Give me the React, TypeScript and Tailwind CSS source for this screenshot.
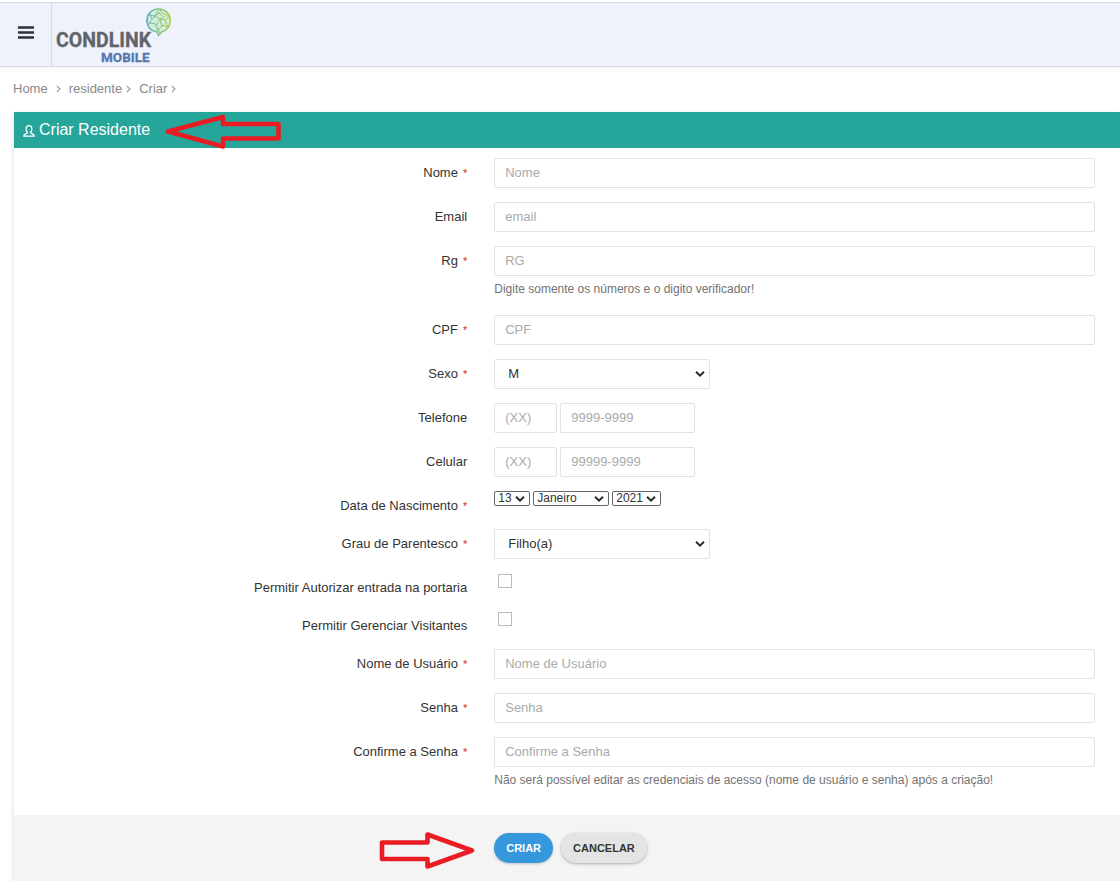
import React from "react";

const inputBase =
  "h-[30px] rounded-xs border border-[#e2e2e2] bg-white px-[10px] pb-[2px] text-[13px] text-[#333] placeholder:text-[#aaa] outline-none focus:border-[#93a1bb]";

function Field({
  id,
  label,
  required,
  help,
  compact,
  children,
}: {
  id: string;
  label: string;
  required?: boolean;
  help?: string;
  compact?: boolean;
  children: React.ReactNode;
}) {
  return (
    <div className="grid grid-cols-[43fr_57fr] gap-[27px]">
      <label htmlFor={id} className="pt-[6px] text-right leading-[18px]">
        {label}
        {required && <span className="ml-[5px] text-[11px] leading-none text-[#e02222]">*</span>}
      </label>
      <div className={compact ? "h-6" : ""}>
        {children}
        {help && <p className="h-[25px] pt-1 text-xs leading-[18px] text-[#737373]">{help}</p>}
      </div>
    </div>
  );
}

function TextField({ id, label, placeholder, required, help, type = "text" }: {
  id: string;
  label: string;
  placeholder: string;
  required?: boolean;
  help?: string;
  type?: string;
}) {
  return (
    <Field id={id} label={label} required={required} help={help}>
      <input id={id} type={type} placeholder={placeholder} className={`${inputBase} block w-full`} />
    </Field>
  );
}

function Chevron() {
  return (
    <svg viewBox="0 0 10 7" className="pointer-events-none absolute top-1/2 right-[5px] h-[7px] w-[10px] -translate-y-1/2" aria-hidden="true">
      <path d="M1 1.2 5 5.2 9 1.2" fill="none" stroke="#2b2b2b" strokeWidth="2" />
    </svg>
  );
}

function LargeSelect({ id, options }: { id: string; options: string[] }) {
  return (
    <div className="relative w-[216px]">
      <select
        id={id}
        className="block h-[30px] w-full appearance-none rounded-xs border border-[#e2e2e2] bg-white px-[13px] text-[13px] text-[#333] outline-none focus:border-[#93a1bb]"
      >
        {options.map((o) => <option key={o}>{o}</option>)}
      </select>
      <Chevron />
    </div>
  );
}

function SmallSelect({ id, label, options, width }: { id: string; label: string; options: string[]; width: string }) {
  return (
    <div className={`relative ${width}`}>
      <select id={id} aria-label={label} className="block h-[15px] w-full appearance-none rounded-xs border border-[#666] bg-white pl-[3px] text-xs leading-[13px] text-[#333]">
        {options.map((o) => <option key={o}>{o}</option>)}
      </select>
      <Chevron />
    </div>
  );
}

function PhoneField({ id, label, placeholder }: { id: string; label: string; placeholder: string }) {
  return (
    <Field id={id} label={label}>
      <div className="flex gap-[3px]">
        <input id={id} type="tel" placeholder="(XX)" className={`${inputBase} w-[63px]`} />
        <input type="tel" aria-label={`${label} número`} placeholder={placeholder} className={`${inputBase} w-[135px]`} />
      </div>
    </Field>
  );
}

function CheckField({ id, label }: { id: string; label: string }) {
  return (
    <Field id={id} label={label} compact>
      <input id={id} type="checkbox" className="mt-px ml-1 block size-[14px] appearance-none border border-[#bbb] bg-white checked:bg-[#3598dc]" />
    </Field>
  );
}

function Logo() {
  return (
    <svg viewBox="0 0 120 62" className="h-[62px] w-[120px]" role="img" aria-label="Condlink Mobile">
      <defs>
        <linearGradient id="globe" x1="0" x2="1">
          <stop offset="0" stopColor="#58b5c4" />
          <stop offset="1" stopColor="#a9cf4a" />
        </linearGradient>
      </defs>
      <circle cx="106.500" cy="17.500" r="11.500" fill="#d3ebd8" />
      <g fill="none" stroke="url(#globe)" strokeLinejoin="round">
        <path strokeWidth="1.600" d="M106.500 6c7 0 11.700 5 11.700 11.500 0 6-4 10-8.700 11.500l-3 3.500-1.500-3.500c-6-1-10-5-10-11.500C95 11 99.500 6 106.500 6Z" />
        <path strokeWidth="1" d="m97 12 6 1 4-7 5 5 5 2-4 5 3 6-6-2-4 6-2-7-7-1 6-7 5 3 5-3m-5 3-4 7m6 1-2-8 5 1m-6-8 3 4m-16 4 3 6m3-7-2-5m7 15 3 4m0-20-4 2" />
      </g>
      <text x="4" y="44" fontFamily="Roboto, sans-serif" fontSize="19.500" fontWeight="700" fill="#626469" stroke="#626469" strokeWidth=".3">CONDLINK</text>
      <text x="49" y="59" fontFamily="Roboto, sans-serif" fontSize="13.500" fontWeight="700" fill="#5279ae" stroke="#5279ae" strokeWidth=".3">MOBILE</text>
    </svg>
  );
}

function Crumb({ children, gap }: { children: string; gap: string }) {
  return (
    <li className={`flex items-center ${gap}`}>
      <a href="#">{children}</a>
      <svg viewBox="0 0 5 8" className="h-2 w-[5px]" aria-hidden="true">
        <path d="m.8.8 3.200 3.200-3.200 3.200" fill="none" stroke="#999" strokeWidth="1.1" />
      </svg>
    </li>
  );
}

const months = ["Janeiro", "Fevereiro", "Março", "Abril", "Maio", "Junho", "Julho", "Agosto", "Setembro", "Outubro", "Novembro", "Dezembro"];

export default function App() {
  return (
    <div className="min-h-screen overflow-x-hidden bg-white font-['Liberation_Sans',Arial,sans-serif] text-[13px] text-[#333]">
      <header className="mt-[2px] flex h-[65px] border-y border-[#d8dae6] bg-[#eff2fb] shadow-xs">
        <button type="button" aria-label="Menu" className="flex w-[52px] items-center justify-center border-r border-[#d8dae6] pb-[5px]">
          <svg viewBox="0 0 16 13" className="h-[13px] w-4" aria-hidden="true">
            <path d="M0 1.500h16M0 6.500h16M0 11.500h16" stroke="#2f3038" strokeWidth="2.600" />
          </svg>
        </button>
        <a href="#"><Logo /></a>
      </header>

      <nav aria-label="Trilha" className="pt-[13px] pl-[13px]">
        <ol className="flex h-[18px] items-center gap-2 text-[#888]">
          <Crumb gap="gap-2">Home</Crumb>
          <Crumb gap="gap-1">residente</Crumb>
          <Crumb gap="gap-1">Criar</Crumb>
        </ol>
      </nav>

      <main className="mt-[14px] ml-[14px] shadow-[0_2px_5px_rgba(0,0,0,0.15)]">
        <div className="relative flex h-9 items-center gap-1 bg-[#26a69a] pl-[9px] text-white">
          <svg viewBox="0 0 12 12" className="mt-[2px] size-3" aria-hidden="true">
            <path d="M4.500 7.500C2.300 5.200 2.500.7 6 .7s3.700 4.500 1.500 6.800c0 1.300 3.800 1 3.800 3.700H.7c0-2.700 3.800-2.400 3.800-3.700Z" fill="none" stroke="#fff" strokeWidth="1.200" />
          </svg>
          <h1 className="text-base">Criar Residente</h1>
          <svg viewBox="0 0 118 36" className="absolute top-[2px] left-[150px] h-9 w-[118px]" aria-hidden="true">
            <path d="M4 17.500 59 3v7h55.500V24.500H59V32.500Z" fill="none" stroke="#e91c24" strokeWidth="4.600" strokeLinejoin="round" />
          </svg>
        </div>

        <form onSubmit={(e) => e.preventDefault()}>
          <div className="flex flex-col gap-[14px] pt-[10px] pr-[25px] pb-[23px]">
            <TextField id="nome" label="Nome" placeholder="Nome" required />
            <TextField id="email" label="Email" placeholder="email" type="email" />
            <TextField id="rg" label="Rg" placeholder="RG" required help="Digite somente os números e o digito verificador!" />
            <TextField id="cpf" label="CPF" placeholder="CPF" required />
            <Field id="sexo" label="Sexo" required>
              <LargeSelect id="sexo" options={["M", "F"]} />
            </Field>
            <PhoneField id="telefone" label="Telefone" placeholder="9999-9999" />
            <PhoneField id="celular" label="Celular" placeholder="99999-9999" />
            <Field id="dia" label="Data de Nascimento" required compact>
              <div className="flex gap-[3px]">
                <SmallSelect id="dia" label="Dia" options={["13", "14", "15"]} width="w-9" />
                <SmallSelect id="mes" label="Mês" options={months} width="w-[76px]" />
                <SmallSelect id="ano" label="Ano" options={["2021", "2020", "2019"]} width="w-[49px]" />
              </div>
            </Field>
            <Field id="grau" label="Grau de Parentesco" required>
              <LargeSelect id="grau" options={["Filho(a)", "Cônjuge"]} />
            </Field>
            <CheckField id="portaria" label="Permitir Autorizar entrada na portaria" />
            <CheckField id="visitantes" label="Permitir Gerenciar Visitantes" />
            <TextField id="usuario" label="Nome de Usuário" placeholder="Nome de Usuário" required />
            <TextField id="senha" label="Senha" placeholder="Senha" type="password" required />
            <TextField
              id="confirma"
              label="Confirme a Senha"
              placeholder="Confirme a Senha"
              type="password"
              required
              help="Não será possível editar as credenciais de acesso (nome de usuário e senha) após a criação!"
            />
          </div>
          <div className="grid grid-cols-[43fr_57fr] gap-[27px] bg-[#f4f4f4] py-[18px] pr-[25px]">
            <div className="relative">
              <svg viewBox="0 0 98 38" className="absolute -top-[2px] -right-[9px] h-[38px] w-[98px]" aria-hidden="true">
                <path d="M4 11.500h45.500V3.500L94 19.500 49.500 35.500v-7.500H4Z" fill="none" stroke="#e91c24" strokeWidth="4.600" strokeLinejoin="round" />
              </svg>
            </div>
            <div className="flex gap-2 text-[11px] font-bold">
              <button type="submit" className="h-[30px] rounded-full bg-[#3598dc] px-3 text-white shadow-[0_1px_3px_rgba(0,0,0,0.2)]">CRIAR</button>
              <button type="button" className="h-[30px] rounded-full bg-[#e4e4e4] px-3 text-[#333] shadow-[0_1px_3px_rgba(0,0,0,0.3)]">CANCELAR</button>
            </div>
          </div>
        </form>
      </main>
    </div>
  );
}
